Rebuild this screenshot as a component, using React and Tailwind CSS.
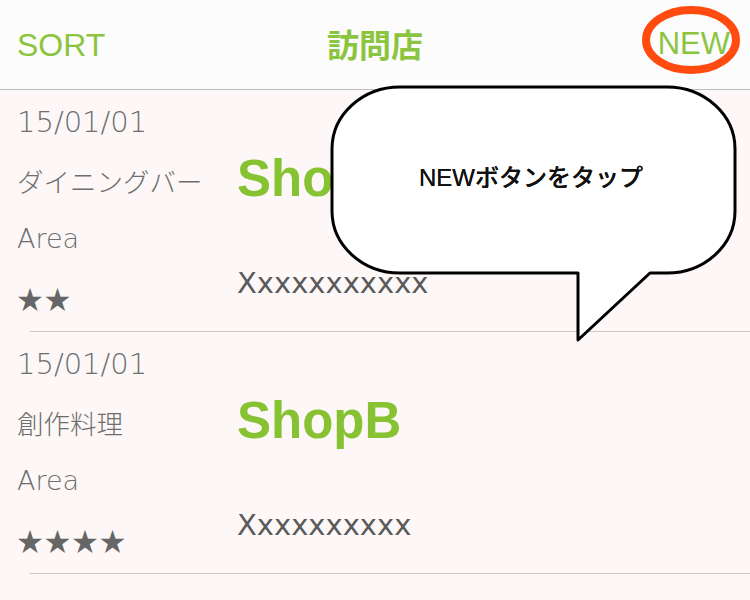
import React from 'react';

const shops = [
    { date: '15/01/01', genre: 'ダイニングバー', area: 'Area', stars: 2, name: 'ShopA', note: 'Xxxxxxxxxxx' },
    { date: '15/01/01', genre: '創作料理', area: 'Area', stars: 4, name: 'ShopB', note: 'Xxxxxxxxxx' },
];

const latin = { fontFamily: '"DejaVu Sans", "Noto Sans CJK JP", sans-serif' };

const ShopRow = ({ shop }) => (
    <div className="flex flex-col">
        <div className="flex h-[241px]">
            {/* Left column */}
            <div className="w-[237px] pl-[17px] pt-[4px] flex flex-col text-[#6e6e6e]">
                <div className="h-[58px] flex items-center text-[29px] font-[300]" style={latin}>{shop.date}</div>
                <div className="h-[58px] flex items-center text-[26.5px] font-['Noto_Sans_CJK_JP',sans-serif] font-[300]">{shop.genre}</div>
                <div className="h-[58px] flex items-center text-[27px] font-[300]" style={latin}>{shop.area}</div>
                <div className="h-[58px] flex items-center text-[26px] text-[#666] font-['Noto_Sans_CJK_JP',sans-serif] tracking-[1.5px]">
                    {'★'.repeat(shop.stars)}
                </div>
            </div>
            {/* Right column */}
            <div className="flex-1 pt-[60px] flex flex-col">
                <div className="h-[58px] flex items-center text-[51px] font-bold text-[#86c232] font-['Liberation_Sans',sans-serif]">
                    {shop.name}
                </div>
                <div className="mt-[58px] leading-[34px] text-[29px] text-[#5a5a5a]" style={latin}>{shop.note}</div>
            </div>
        </div>
        <div className="ml-[30px] h-px bg-[#c9c6c5]" />
    </div>
);

export default function App() {
    return (
        <div className="relative w-[750px] h-[600px] overflow-hidden bg-[#fdf8f7] font-['Liberation_Sans','Noto_Sans_CJK_JP',sans-serif]">
            {/* Header */}
            <div className="h-[89px] bg-[#fcfcfc] border-b border-[#bdbdbd] box-content flex items-center text-[#8bc53f]">
                <div className="w-[150px] pl-[17px] text-[32px] font-['Liberation_Sans',sans-serif]">SORT</div>
                <div className="flex-1 text-center text-[32px] font-bold font-['Noto_Sans_CJK_JP',sans-serif] -mt-[3px]">訪問店</div>
                <div className="w-[150px] pr-[20px] text-right text-[31px] font-['Liberation_Sans',sans-serif]">NEW</div>
            </div>

            {/* List */}
            <div className="flex flex-col">
                {shops.map((s, i) => (
                    <ShopRow key={i} shop={s} />
                ))}
            </div>

            {/* Annotation overlay */}
            <svg className="absolute left-0 top-0 pointer-events-none" width="750" height="600" viewBox="0 0 750 600">
                <ellipse cx="691" cy="40" rx="45" ry="30" fill="none" stroke="#ff4b10" strokeWidth="8" />
                <path
                    d="M 400 87 H 667 A 68 62 0 0 1 735 149 V 211 A 68 62 0 0 1 667 273 H 650 L 578 340 V 273 H 400 A 68 62 0 0 1 332 211 V 149 A 68 62 0 0 1 400 87 Z"
                    fill="#ffffff"
                    stroke="#000000"
                    strokeWidth="3"
                    strokeLinejoin="round"
                />
            </svg>
            <div className="absolute left-[332px] top-[87px] w-[398px] h-[182px] flex items-center justify-center text-[24px] font-medium text-[#111] font-['Liberation_Sans','Noto_Sans_CJK_JP',sans-serif] [text-shadow:0_0_0.4px_#111]">
                NEWボタンをタップ
            </div>
        </div>
    );
}
